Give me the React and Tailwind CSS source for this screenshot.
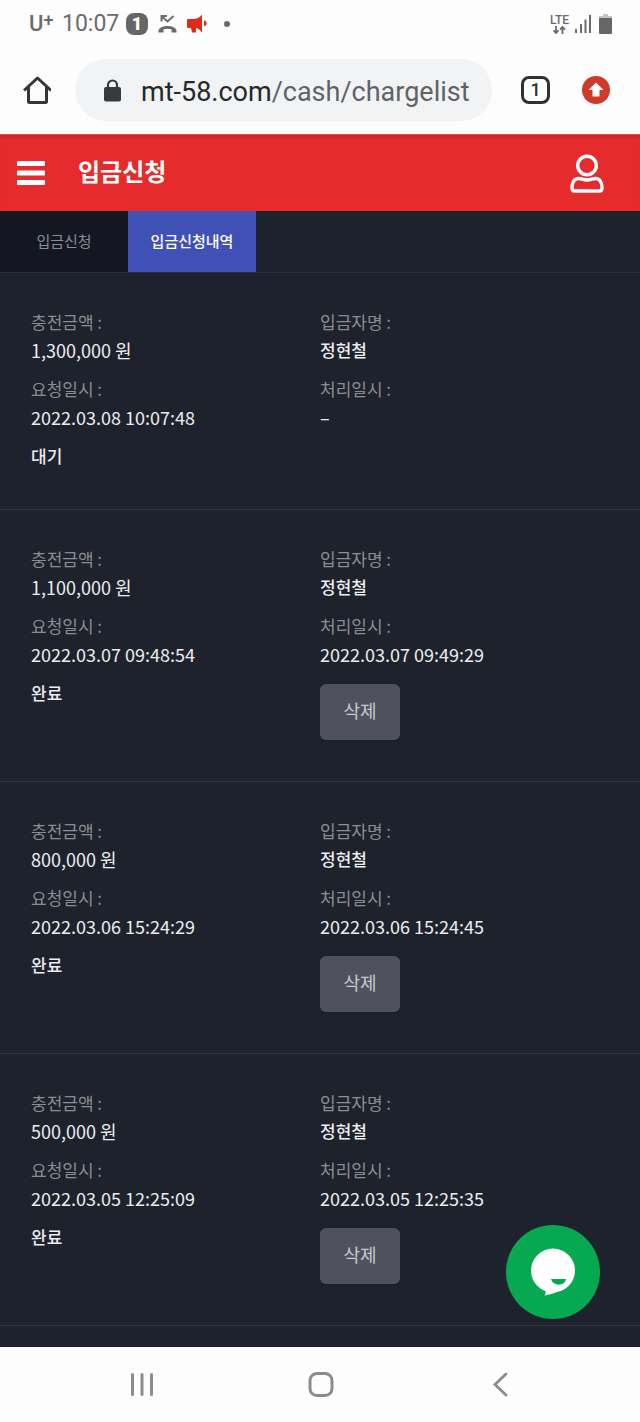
import React from 'react';

const records = [
  { amount: '1,300,000', name: '정현철', requested: '2022.03.08 10:07:48', processed: '–', status: '대기', removable: false },
  { amount: '1,100,000', name: '정현철', requested: '2022.03.07 09:48:54', processed: '2022.03.07 09:49:29', status: '완료', removable: true },
  { amount: '800,000', name: '정현철', requested: '2022.03.06 15:24:29', processed: '2022.03.06 15:24:45', status: '완료', removable: true },
  { amount: '500,000', name: '정현철', requested: '2022.03.05 12:25:09', processed: '2022.03.05 12:25:35', status: '완료', removable: true },
];

const StatusBar = () => (
  <div className="flex h-12 items-center justify-between pl-[29px] pr-7 font-['Roboto',sans-serif] text-[#6b6b6b]">
    <div className="flex items-center">
      <span className="flex w-[33px] items-start text-[22px] leading-6 font-medium">
        U<span className="text-lg leading-4">+</span>
      </span>
      <span className="w-16 text-[23px] leading-6">10:07</span>
      <span className="flex h-[22px] w-[22px] items-center justify-center rounded-lg bg-[#666] text-lg font-black text-white">1</span>
      {/* Missed call */}
      <svg className="ml-[10px] h-5 w-5" viewBox="0 0 20 20" fill="none">
        <path d="M3.500 7.500V2H9M3.500 2l6 5.500 6-5.500" stroke="currentColor" strokeWidth="2" />
        <path d="M.5 18.500v-2.500C3 10.500 16 10.500 18.500 16v2.500h-5v-3.200c-2.500-.8-5.500-.8-8 0v3.200z" fill="currentColor" />
      </svg>
      {/* Megaphone */}
      <svg className="ml-[9px] h-5 w-5" viewBox="0 0 20 20" fill="#dc2c18">
        <path d="M1 5h6.500C11 4.500 13 3 14.500 1h.5v17h-.5C13 16 11.500 14.500 9 14v4.500H5L4 14H1q-1 0-1-1V6q0-1 1-1z" />
        <path d="M17 6.500c2 0 2.500 1 2.500 2.800S19 12 17 12z" />
      </svg>
      <span className="ml-[17px] h-1.5 w-1.5 rounded-full bg-[#6b6b6b]"></span>
    </div>
    <div className="flex items-center">
      <div className="flex w-[25px] flex-col items-start">
        <span className="text-xs leading-[11px] font-medium">LTE</span>
        <svg className="ml-[3px] h-2 w-[13px]" viewBox="0 0 13 8" fill="none" stroke="currentColor" strokeWidth="1.8">
          <path d="M3 0v7M.5 4.300L3 7l2.500-2.700M9.500 8V1M7 3.700L9.500 1 12 3.700" />
        </svg>
      </div>
      <svg className="h-[18px] w-[17px]" viewBox="0 0 17 18" fill="currentColor">
        <path d="M0 14h2v4H0zM5 9h2v9H5zM9.500 4.500h2V18h-2zM14 0h2v18h-2z" />
      </svg>
      <svg className="ml-[7px] h-5 w-[13px]" viewBox="0 0 13 20">
        <path d="M4 0h5v2h4v2H0V2h4z" fill="#c4c4c4" />
        <path d="M0 4h13v15q0 1-1 1H1q-1 0-1-1z" fill="#666" />
      </svg>
    </div>
  </div>
);

const AddressBar = () => (
  <div className="flex items-center px-[23px] pt-[11px] pb-[13px] font-['Roboto',sans-serif]">
    <button aria-label="Home" className="text-[#333639]">
      <svg className="h-[30px] w-7" viewBox="0 0 28 30" fill="none" stroke="currentColor" strokeWidth="3" strokeLinejoin="round">
        <path d="M1 15.500L14.500 3 28 15.500M5.500 12v14.500q0 1 1 1h16q1 0 1-1V12" />
      </svg>
    </button>
    <div className="ml-6 flex h-[62px] min-w-0 flex-1 items-center rounded-full bg-[#f1f3f5] pl-[29px]">
      <svg className="h-[23px] w-[17px] shrink-0" viewBox="0 0 17 23" fill="none">
        <path d="M4 9V6a4.500 4.500 0 0 1 9 0v3" stroke="#36393d" strokeWidth="2.200" />
        <rect y="8" width="17" height="14.500" rx="2" fill="#36393d" />
      </svg>
      <span className="ml-5 pt-1 text-[27px] whitespace-nowrap text-[#5f6368]">
        <span className="text-[#26282b]">mt-58.com</span>/cash/chargelist
      </span>
    </div>
    <button aria-label="Tabs" className="ml-[29px] flex h-7 w-[29px] items-center justify-center rounded-lg border-[3px] border-[#2f3235] text-lg font-medium text-[#2f3235]">
      1
    </button>
    <button aria-label="Update" className="ml-8 mr-[7px]">
      <svg className="h-7 w-7" viewBox="0 0 28 28">
        <circle cx="14" cy="14" r="14" fill="#d03a2b" />
        <path d="M14 6.500l7.500 7.500H17.500v6.500h-7V14H6.500z" fill="#fff" />
      </svg>
    </button>
  </div>
);

const Header = () => (
  <header className="flex h-[77px] items-center border-t border-[#d94f4f] bg-[#e62b2c] px-[17px] text-white shadow-[inset_0_4px_4px_-2px_#00000026]">
    <button aria-label="Menu">
      <svg className="h-[26px] w-7" viewBox="0 0 28 26" fill="currentColor">
        <rect y="1" width="28" height="5" rx="1" />
        <rect y="10.500" width="28" height="5" rx="1" />
        <rect y="20" width="28" height="5" rx="1" />
      </svg>
    </button>
    <h1 className="ml-[33px] flex-1 pb-1 text-2xl font-bold">입금신청</h1>
    <button aria-label="Account" className="mr-[19px]">
      <svg className="h-[39px] w-[34px]" viewBox="0 0 34 39" fill="none" stroke="currentColor" strokeWidth="3.400">
        <circle cx="17" cy="11.500" r="9.300" />
        <path d="M8.500 24.500c3.500 0 4.500 1.500 8.500 1.500s5-1.500 8.500-1.500c4.500 0 6.500 4.500 6.500 9.500 0 2-.8 3-2.500 3h-25C2.800 37 2 36 2 34c0-5 2-9.500 6.500-9.500z" />
      </svg>
    </button>
  </header>
);

const Tabs = () => (
  <nav className="flex h-[62px] border-b border-[#2a2f3a] text-[15px]">
    <a href="#charge" className="flex w-1/5 items-center justify-center bg-[#141722] text-[#8a8c93]">입금신청</a>
    <a href="#chargelist" className="flex w-1/5 items-center justify-center bg-[#3f51b5] font-medium text-white">입금신청내역</a>
  </nav>
);

const Record = ({ record }) => (
  <li className="grid grid-cols-[289px_1fr] gap-y-[11px] border-b border-[#31343a] px-[31px] pt-[35px] pb-[39px] text-[17px] leading-7 text-[#eceded]">
    <div>
      <p className="text-[#8b8d91]">충전금액 :</p>
      <p className="text-lg leading-7">{record.amount} 원</p>
    </div>
    <div>
      <p className="text-[#8b8d91]">입금자명 :</p>
      <p className="font-medium">{record.name}</p>
    </div>
    <div>
      <p className="text-[#8b8d91]">요청일시 :</p>
      <p className="text-lg leading-7">{record.requested}</p>
    </div>
    <div>
      <p className="text-[#8b8d91]">처리일시 :</p>
      <p className="text-lg leading-7">{record.processed}</p>
    </div>
    <p className="font-medium">{record.status}</p>
    {record.removable && (
      <div className="mt-[5px] mb-0.5 flex">
        <button className="h-14 w-20 rounded-md bg-[#4f525d] pb-1 text-lg text-[#c9cacd]">삭제</button>
      </div>
    )}
  </li>
);

const BottomNav = () => (
  <div className="flex h-[75px] items-center justify-between bg-[#fdfdfd] px-32 text-[#8c8c8c]">
    <button aria-label="Recent apps">
      <svg className="h-7 w-7" viewBox="0 0 28 28" stroke="currentColor" strokeWidth="3" strokeLinecap="round">
        <path d="M4.500 3.500v20M14 3.500v20M23.500 3.500v20" />
      </svg>
    </button>
    <button aria-label="Home screen">
      <svg className="h-7 w-7" viewBox="0 0 28 28" fill="none" stroke="currentColor" strokeWidth="3">
        <rect x="4" y="2.500" width="22" height="22" rx="7" />
      </svg>
    </button>
    <button aria-label="Back">
      <svg className="h-7 w-7" viewBox="0 0 28 28" fill="none" stroke="currentColor" strokeWidth="2.800" strokeLinecap="round">
        <path d="M22 3L11 13.500 22 24" />
      </svg>
    </button>
  </div>
);

const App = () => {
  return (
    <div className="flex min-h-screen flex-col bg-[#fdfdfd] font-['Noto_Sans_CJK_KR',sans-serif]">
      <StatusBar />
      <AddressBar />
      <Header />
      <main className="relative flex-1 bg-[#1e222d]">
        <Tabs />
        <ul>
          {records.map((record) => (
            <Record key={record.requested} record={record} />
          ))}
        </ul>
        {/* Chat widget */}
        <button aria-label="Chat" className="absolute right-10 bottom-7 h-[94px] w-[94px] rounded-full bg-[#06a850]">
          <svg className="h-full w-full" viewBox="0 0 94 94">
            <circle cx="47" cy="45.500" r="22" fill="#fff" />
            <path d="M39 64q1.500 3-.5 6.500 12-2 20-8z" fill="#fff" />
            <path d="M45 54h15c-1 7.500-13 7.500-15 0z" fill="#06a850" />
          </svg>
        </button>
      </main>
      <BottomNav />
    </div>
  );
};

export default App;
